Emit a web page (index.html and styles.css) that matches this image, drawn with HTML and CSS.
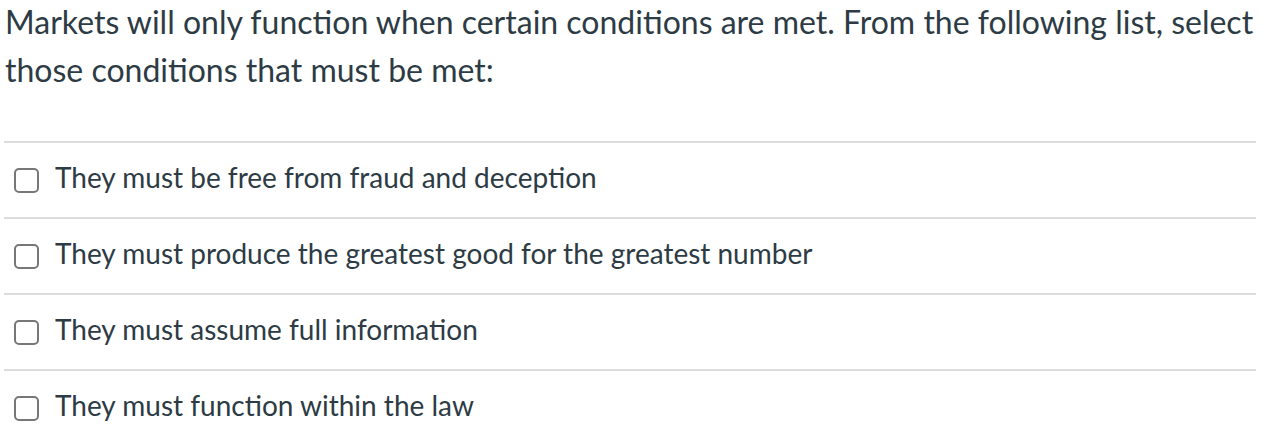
FILE: index.html
```html
<!DOCTYPE html>
<html>
<head>
<meta charset="utf-8">
<link rel="stylesheet" href="styles.css">
</head>
<body>
<div class="quiz">
  <p class="question">Markets will only function when certain conditions are met. From the following list, select those conditions that must be met:</p>
  <ul class="answers">
    <li class="answer"><span class="box"></span><span class="label">They must be free from fraud and deception</span></li>
    <li class="answer"><span class="box"></span><span class="label">They must produce the greatest good for the greatest number</span></li>
    <li class="answer"><span class="box"></span><span class="label">They must assume full information</span></li>
    <li class="answer"><span class="box"></span><span class="label">They must function within the law</span></li>
  </ul>
</div>
</body>
</html>
```

FILE: styles.css
```css
html, body {
  margin: 0;
  padding: 0;
  background: #fff;
}
body {
  font-family: Lato, "Open Sans", sans-serif;
  color: #2d3b45;
  overflow: hidden;
}
.quiz {
  padding: 0 6px 0 4px;
}
.question {
  margin: -2px 0 47px 1px;
  font-size: 32px;
  line-height: 48px;
}
.answers {
  list-style: none;
  margin: 0;
  padding: 0;
}
.answer {
  display: flex;
  align-items: center;
  height: 74px;
  border-top: 2px solid #dcdcdc;
  font-size: 28px;
}
.box {
  width: 21px;
  height: 21px;
  border: 2px solid #777;
  border-radius: 5px;
  margin-left: 10px;
  margin-right: 16px;
  flex: none;
}
.label {
  padding-bottom: 6px;
}
```
